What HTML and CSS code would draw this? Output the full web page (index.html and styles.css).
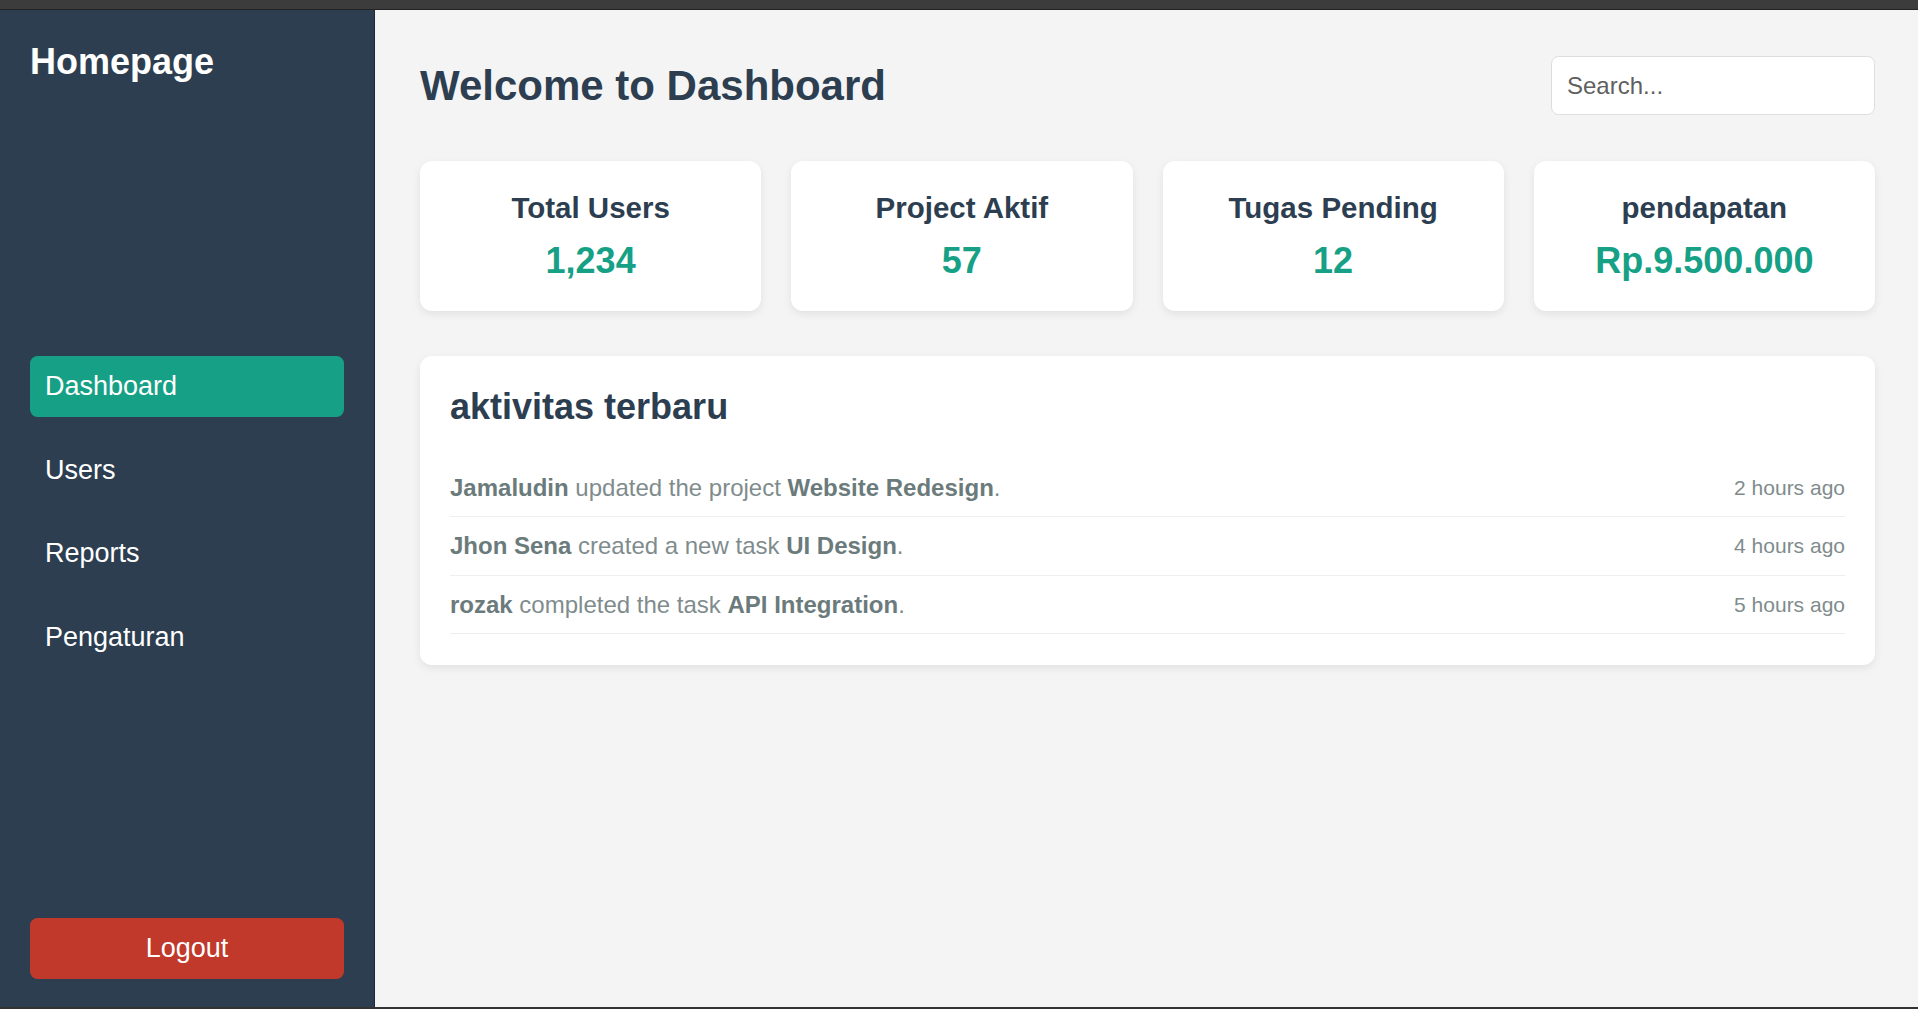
FILE: index.html
```html
<!DOCTYPE html>
<html lang="id">
<head>
<meta charset="utf-8">
<title>Dashboard</title>
<link rel="stylesheet" href="styles.css">
</head>
<body>
<div class="frame-top"></div>
<div class="app">
  <aside class="sidebar">
    <h2 class="brand">Homepage</h2>
    <nav class="nav">
      <a class="nav-link active" href="#">Dashboard</a>
      <a class="nav-link" href="#">Users</a>
      <a class="nav-link" href="#">Reports</a>
      <a class="nav-link" href="#">Pengaturan</a>
    </nav>
    <button class="logout">Logout</button>
  </aside>
  <main class="main">
    <header class="header">
      <h1 class="title">Welcome to Dashboard</h1>
      <input class="search" type="text" placeholder="Search...">
    </header>
    <section class="stats">
      <div class="card">
        <h3 class="card-title">Total Users</h3>
        <p class="card-value">1,234</p>
      </div>
      <div class="card">
        <h3 class="card-title">Project Aktif</h3>
        <p class="card-value">57</p>
      </div>
      <div class="card">
        <h3 class="card-title">Tugas Pending</h3>
        <p class="card-value">12</p>
      </div>
      <div class="card">
        <h3 class="card-title">pendapatan</h3>
        <p class="card-value">Rp.9.500.000</p>
      </div>
    </section>
    <section class="activity">
      <h2 class="activity-title">aktivitas terbaru</h2>
      <ul class="activity-list">
        <li class="activity-item"><span><strong>Jamaludin</strong> updated the project <strong>Website Redesign</strong>.</span><span class="time">2 hours ago</span></li>
        <li class="activity-item"><span><strong>Jhon Sena</strong> created a new task <strong>UI Design</strong>.</span><span class="time">4 hours ago</span></li>
        <li class="activity-item"><span><strong>rozak</strong> completed the task <strong>API Integration</strong>.</span><span class="time">5 hours ago</span></li>
      </ul>
    </section>
  </main>
</div>
<div class="frame-bottom"></div>
</body>
</html>
```
FILE: styles.css
```css
* {
  box-sizing: border-box;
}

html, body {
  margin: 0;
  padding: 0;
}

body {
  font-family: "Liberation Sans", Arial, sans-serif;
  background: #f4f4f4;
  overflow: hidden;
}

.frame-top {
  height: 10px;
  background: #3c3c3c;
  border-bottom: 1px solid #222222;
}

.frame-bottom {
  height: 2px;
  background: #333333;
}

.app {
  display: flex;
  height: 997px;
}

.sidebar {
  width: 375px;
  flex-shrink: 0;
  background: #2c3e50;
  border-right: 1px solid #1b2a3b;
  padding: 31px 30px 28px;
  display: flex;
  flex-direction: column;
}

.brand {
  margin: 0;
  color: #ffffff;
  font-size: 36px;
  line-height: 41px;
  font-weight: bold;
}

.nav {
  margin-top: 274px;
  display: flex;
  flex-direction: column;
  gap: 22.5px;
}

.nav-link {
  display: block;
  padding: 15px 15px;
  font-size: 27px;
  line-height: 31px;
  color: #ffffff;
  text-decoration: none;
  border-radius: 7.5px;
}

.nav-link.active {
  background: #16a085;
}

.logout {
  margin-top: auto;
  width: 100%;
  height: 61px;
  border: none;
  border-radius: 7.5px;
  background: #c0392b;
  color: #ffffff;
  font-family: "Liberation Sans", Arial, sans-serif;
  font-size: 27px;
}

.main {
  flex: 1;
  background: #f4f4f4;
  padding: 46px 43px 0 45px;
}

.header {
  display: flex;
  justify-content: space-between;
  align-items: center;
  height: 59px;
  margin-bottom: 46px;
}

.title {
  margin: 0;
  font-size: 42px;
  line-height: 48px;
  font-weight: bold;
  color: #2c3e50;
}

.search {
  width: 324px;
  height: 59px;
  padding: 0 15px;
  border: 1.5px solid #dddddd;
  border-radius: 7.5px;
  background: #ffffff;
  font-family: "Liberation Sans", Arial, sans-serif;
  font-size: 24px;
  color: #333333;
  outline: none;
}

.search::placeholder {
  color: #5f5f5f;
}

.stats {
  display: grid;
  grid-template-columns: repeat(4, 1fr);
  gap: 30px;
  margin-bottom: 45px;
}

.card {
  background: #ffffff;
  border-radius: 12px;
  padding: 30px;
  text-align: center;
  box-shadow: 0 3px 9px rgba(0, 0, 0, 0.08);
}

.card-title {
  margin: 0 0 15px;
  font-size: 29.5px;
  line-height: 34px;
  font-weight: bold;
  color: #2c3e50;
}

.card-value {
  margin: 0;
  font-size: 36px;
  line-height: 41px;
  font-weight: bold;
  color: #16a085;
}

.activity {
  background: #ffffff;
  border-radius: 12px;
  padding: 30px 30px 31px;
  box-shadow: 0 3px 9px rgba(0, 0, 0, 0.08);
}

.activity-title {
  margin: 0 0 31.5px;
  font-size: 36px;
  line-height: 41px;
  font-weight: bold;
  color: #2c3e50;
}

.activity-list {
  list-style: none;
  margin: 0;
  padding: 0;
}

.activity-item {
  display: flex;
  justify-content: space-between;
  align-items: center;
  padding: 15px 0;
  border-bottom: 1.5px solid #eeeeee;
  font-size: 24px;
  line-height: 27.6px;
  color: #7f8c8d;
}

.activity-item strong {
  color: #6b7b7c;
}

.time {
  font-size: 21px;
  color: #7f8c8d;
}
```
